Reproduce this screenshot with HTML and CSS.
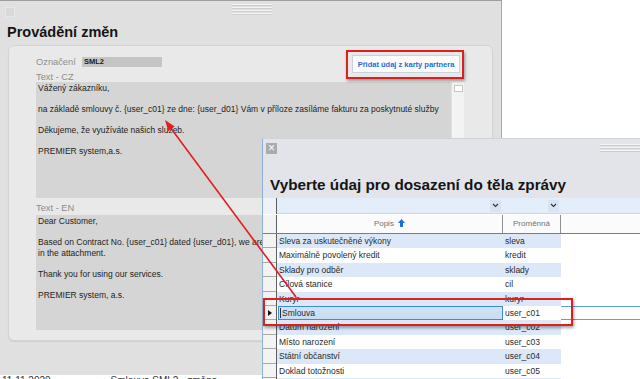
FILE: index.html
```html
<!DOCTYPE html>
<html lang="cs">
<head>
    <meta charset="UTF-8">
    <meta name="viewport" content="width=device-width, initial-scale=1.0">
    <title>Provádění změn</title>
    <link rel="stylesheet" href="styles.css">
</head>
<body>
    <div class="okno">
        <div class="lista">
            <span class="zavrit-sede"></span>
            <span class="uchyt"></span>
        </div>
        <h1>Provádění změn</h1>

        <div class="panel">
            <div class="radek">
                <div class="pole">
                    <label>Označení</label>
                    <span class="hodnota">SML2</span>
                </div>
                <button class="tlacitko">Přidat údaj z karty partnera</button>
            </div>

            <div class="stitek">Text - CZ</div>
            <div class="oblast">
                <div class="text">
                    <p>Vážený zákazníku,</p>
                    <p>na základě smlouvy č. {user_c01} ze dne: {user_d01} Vám v příloze zasíláme fakturu za poskytnuté služby</p>
                    <p>Děkujeme, že využíváte našich služeb.</p>
                    <p>PREMIER system,a.s.</p>
                </div>
                <div class="posuvnik"><span class="sipka"></span></div>
            </div>

            <div class="stitek stitek-en">Text - EN</div>
            <div class="oblast oblast-en">
                <div class="text">
                    <p>Dear Customer,</p>
                    <p class="bez-zalomeni">Based on Contract No. {user_c01} dated {user_d01}, we are sending you the invoice for the services provided<br>in the attachment.</p>
                    <p>Thank you for using our services.</p>
                    <p>PREMIER system, a.s.</p>
                </div>
                <div class="posuvnik"><span class="sipka"></span></div>
            </div>
        </div>
    </div>
    <div class="pied">
        <span>11.11.2020</span><span>Smlouva SML2 - změna</span><span>SML2</span>
    </div>

    <!-- Dialog pro výběr údaje -->
    <div class="dialog">
        <div class="dialog-lista">
            <span class="zavrit">&times;</span>
            <span class="uchyt uchyt-dialog"></span>
        </div>
        <h2>Vyberte údaj pro dosazení do těla zprávy</h2>
        <div class="mrizka">
            <div class="filtr">
                <span class="hlava-radku"></span>
                <span class="bunka sl1"><span class="rozbal"><svg width="7" height="5" viewBox="0 0 7 5"><polyline points="1,1 3.5,3.5 6,1" fill="none" stroke="#333" stroke-width="1.1"/></svg></span></span>
                <span class="bunka sl2"><span class="rozbal"><svg width="7" height="5" viewBox="0 0 7 5"><polyline points="1,1 3.5,3.5 6,1" fill="none" stroke="#333" stroke-width="1.1"/></svg></span></span>
                <span class="bunka zbytek"></span>
            </div>
            <div class="zahlavi">
                <span class="hlava-radku"></span>
                <span class="bunka sl1">Popis <svg class="razeni" width="7" height="8" viewBox="0 0 7 8"><polygon points="3.5,0 7,4 5,4 5,8 2,8 2,4 0,4" fill="#1d6fd8"/></svg></span>
                <span class="bunka sl2">Proměnná</span>
                <span class="bunka zbytek"></span>
            </div>
            <div id="radky"></div>
        </div>
    </div>

    <!-- Zvýraznění -->
    <div class="ramecek ramecek-tlacitko"></div>
    <div class="ramecek ramecek-radek"></div>
    <svg class="sipka-cervena" width="640" height="379" viewBox="0 0 640 379">
        <line x1="296" y1="297" x2="170" y2="127" stroke="#e01f1f" stroke-width="1.6"/>
        <polygon points="165,120 174.7,126.4 168.3,131.2" fill="#e01f1f"/>
    </svg>

    <script>
        // Položky, které lze dosadit do zprávy
        const polozky = [
            { popis: "Sleva za uskutečněné výkony", promenna: "sleva" },
            { popis: "Maximálně povolený kredit", promenna: "kredit" },
            { popis: "Sklady pro odběr", promenna: "sklady" },
            { popis: "Cílová stanice", promenna: "cil" },
            { popis: "Kurýr", promenna: "kuryr" },
            { popis: "Smlouva", promenna: "user_c01" },
            { popis: "Datum narození", promenna: "user_c02" },
            { popis: "Místo narození", promenna: "user_c03" },
            { popis: "Státní občanství", promenna: "user_c04" },
            { popis: "Doklad totožnosti", promenna: "user_c05" },
            { popis: "", promenna: "" },
        ];
        const vybrana = 5; // Index vybraného řádku

        const radky = document.getElementById('radky');
        polozky.forEach((p, i) => {
            const radek = document.createElement('div');
            radek.className = 'radek-mrizky';
            if (i % 2 === 0) radek.classList.add('sudy');
            if (i === vybrana) radek.classList.add('vybrany');
            const popis = i === vybrana
                ? `<span class="bunka sl1"><span class="kurzor"></span>${p.popis}</span>`
                : `<span class="bunka sl1">${p.popis}</span>`;
            radek.innerHTML = `<span class="hlava-radku"></span>${popis}<span class="bunka sl2">${p.promenna}</span><span class="bunka zbytek"></span>`;
            radky.appendChild(radek);
        });
    </script>
</body>
</html>
```

FILE: styles.css
```css
/* Základ */
body {
    margin: 0;
    width: 640px;
    height: 379px;
    overflow: hidden;
    position: relative;
    background-color: #ffffff;
    font-family: "Liberation Sans", Arial, sans-serif;
    color: #222222;
}

/* Hlavní okno */
.okno {
    width: 502px;
    height: 375px;
    box-sizing: border-box;
    background-color: #e0e0e0;
    border-top: 1px solid #9d9d9d;
    border-right: 1px solid #a9a9a9;
}

.lista {
    display: flex;
    height: 19px;
    padding: 6px 0 0 5px;
    box-sizing: border-box;
}

.zavrit-sede {
    width: 10px;
    height: 10px;
    background-color: #d9d9d9;
    border: 1px solid #e7e7e7;
    box-sizing: border-box;
}

.uchyt {
    margin: -3px 0 0 217px;
    width: 40px;
    height: 11px;
    background: repeating-linear-gradient(#f3f3f3 0 1px, #cdcdcd 1px 2px, transparent 2px 3px);
}

h1 {
    margin: 3px 0 0 7px;
    font-size: 14.5px;
    line-height: 18px;
    color: #151515;
}

.panel {
    margin: 4px 0 0 8px;
    width: 485px;
    height: 296px;
    box-sizing: border-box;
    background-color: #e9e9e9;
    border: 1px solid #d4d4d4;
    border-radius: 6px;
    box-shadow: 0 1px 1px rgba(0, 0, 0, 0.08);
    padding: 9px 0 0 27px;
}

.radek {
    display: flex;
    justify-content: space-between;
    width: 424px;
    height: 18px;
}

.pole {
    display: flex;
    gap: 5px;
    margin-top: 2px;
}

.pole label {
    width: 41px;
    font-size: 9.3px;
    line-height: 10px;
    color: #8e8e8e;
}

.hodnota {
    width: 80px;
    height: 10px;
    line-height: 10px;
    padding-left: 2px;
    box-sizing: border-box;
    background-color: #c5c5c5;
    font-size: 7.5px;
    font-weight: bold;
    color: #202020;
}

.tlacitko {
    width: 108px;
    height: 18px;
    padding: 0;
    background-color: #fbfbfb;
    border: 1px solid #cbd2dc;
    font-family: "Liberation Sans", Arial, sans-serif;
    font-size: 7.5px;
    font-weight: bold;
    color: #1c6fd8;
}

.stitek {
    font-size: 9.3px;
    line-height: 9px;
    color: #8c8c8c;
}

.stitek-en {
    padding-top: 4px;
    line-height: 13px;
}

.oblast {
    display: flex;
    width: 428px;
    height: 116px;
}

.oblast-en {
    height: 115px;
}

.text {
    flex: 1;
    padding: 1px 2px;
    background-color: #d5d5d5;
    font-size: 8.5px;
    line-height: 10.5px;
    color: #232323;
    overflow: hidden;
}

.text p {
    margin: 0 0 10.5px;
}

.bez-zalomeni {
    white-space: nowrap;
}

.posuvnik {
    width: 12px;
    background-color: #f3f3f3;
    border-left: 1px solid #e2e2e2;
}

.sipka {
    display: block;
    margin: 3px auto 0;
    width: 9px;
    height: 7px;
    background-color: #ffffff;
    border: 1px solid #c6c6c6;
    box-sizing: border-box;
}

.pied {
    height: 4px;
    overflow: hidden;
    display: flex;
    gap: 60px;
    padding-left: 2px;
    font-size: 10px;
    line-height: 12px;
    color: #333333;
    white-space: nowrap;
}

/* Dialog */
.dialog {
    position: absolute;
    left: 262px;
    top: 138px;
    width: 378px;
    height: 241px;
    box-sizing: border-box;
    background-color: #e2e4e9;
    border-left: 1px solid #8cb2da;
    border-top: 1px solid #cfd2d8;
    overflow: hidden;
}

.dialog-lista {
    display: flex;
    height: 36px;
    padding: 4px 0 0 3px;
    box-sizing: border-box;
}

.zavrit {
    width: 11px;
    height: 11px;
    background-color: #a9abae;
    color: #ffffff;
    font-size: 12px;
    line-height: 10px;
    text-align: center;
}

.uchyt-dialog {
    margin: 1px 0 0 auto;
    height: 9px;
}

h2 {
    margin: 0 0 3px 7px;
    font-size: 15.3px;
    line-height: 20px;
    color: #151515;
}

.mrizka {
    background-color: #ffffff;
    font-size: 8.5px;
}

.filtr, .zahlavi, .radek-mrizky {
    display: flex;
}

.hlava-radku {
    width: 13px;
    flex-shrink: 0;
    background-color: #f3f3f3;
    border-right: 1px solid #5e5e5e;
}

.bunka {
    box-sizing: border-box;
    white-space: nowrap;
    overflow: hidden;
}

.sl1 {
    width: 226px;
}

.sl2 {
    width: 58px;
}

.zbytek {
    flex: 1;
}

.filtr {
    height: 16px;
    background-color: #e4eefb;
    border-bottom: 1px solid #ffffff;
}

.filtr .hlava-radku {
    background-color: #eef3fa;
}

.filtr .bunka {
    display: flex;
    justify-content: flex-end;
    align-items: center;
    padding-right: 2px;
    border-bottom: 1px solid #cad6e4;
}

.rozbal {
    display: flex;
    align-items: center;
    justify-content: center;
    width: 11px;
    height: 12px;
    background-color: #d6e4f6;
}

.zahlavi {
    height: 18px;
    background-color: #fbfbfb;
    border-bottom: 1px solid #7d7d7d;
}

.zahlavi .bunka {
    text-align: center;
    line-height: 17px;
    font-size: 8px;
    color: #717171;
    border-right: 1px solid #8f8f8f;
}

.zahlavi .zbytek {
    border-right: none;
}

.razeni {
    vertical-align: -1px;
    margin-left: 2px;
}

.radek-mrizky {
    height: 14.4px;
    line-height: 14.4px;
}

.radek-mrizky .hlava-radku {
    box-shadow: inset 0 -1px 0 #a9a9a9;
}

.radek-mrizky .sl1, .radek-mrizky .sl2 {
    padding-left: 2px;
    color: #2a2a2a;
}

.sudy .sl1, .sudy .sl2 {
    background-color: #dce8f8;
}

.vybrany .hlava-radku {
    display: flex;
    align-items: center;
    justify-content: center;
}

.vybrany .hlava-radku::before {
    content: '';
    border-left: 4px solid #111111;
    border-top: 3px solid transparent;
    border-bottom: 3px solid transparent;
}

.vybrany .sl1 {
    display: flex;
    align-items: center;
    margin-left: 1px;
    width: 225px;
    background: linear-gradient(#d4e4f6, #c6dbf2);
    box-shadow: inset 0 0 0 1px #3b8be0;
}

.kurzor {
    width: 1px;
    height: 10px;
    margin-right: 1px;
    background-color: #333333;
}

.vybrany .zbytek {
    box-shadow: inset 0 1px 0 #5aa0e2, inset 0 -1px 0 #5aa0e2;
}

/* Zvýraznění (anotace) */
.ramecek {
    position: absolute;
    box-sizing: border-box;
    border: 2px solid #db2020;
    box-shadow: 1px 2px 3px rgba(0, 0, 0, 0.35);
}

.ramecek-tlacitko {
    left: 346px;
    top: 50px;
    width: 118px;
    height: 29px;
}

.ramecek-radek {
    left: 263px;
    top: 298px;
    width: 310px;
    height: 28px;
}

.sipka-cervena {
    position: absolute;
    left: 0;
    top: 0;
    pointer-events: none;
}
```
